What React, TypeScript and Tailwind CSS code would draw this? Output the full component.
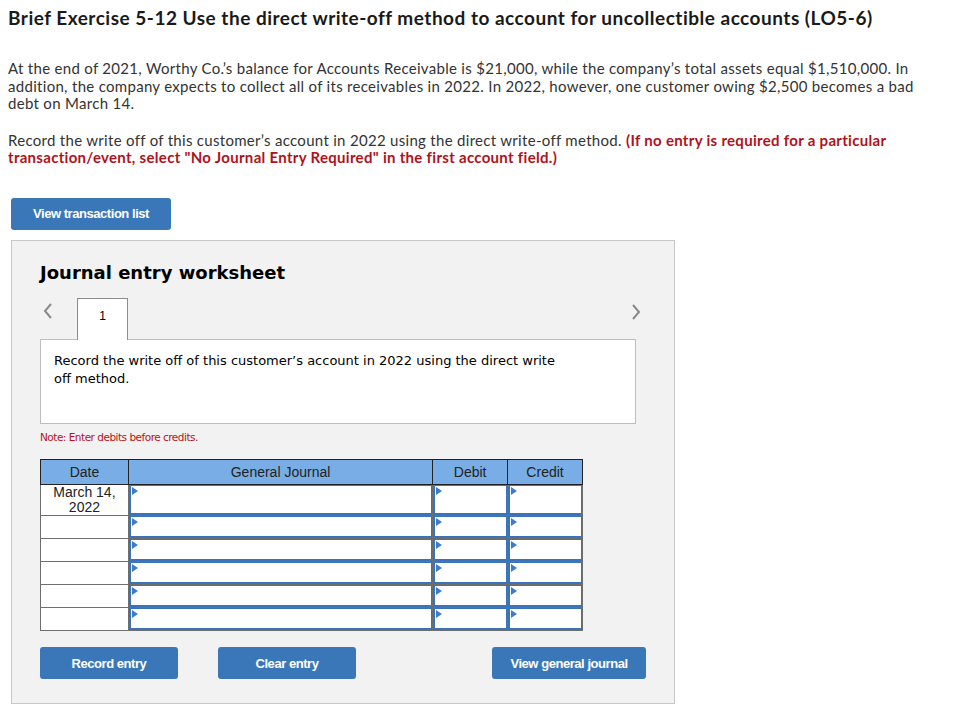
import React from "react";

const rows = [
  { date: ["March 14,", "2022"] },
  { date: null },
  { date: null },
  { date: null },
  { date: null },
  { date: null },
];

function Marker() {
  return (
    <svg className="absolute left-[1px] top-[1px]" width="6" height="8" viewBox="0 0 6 8">
      <path d="M0 0 L6 4 L0 8 Z" fill="#3d7cc9" />
    </svg>
  );
}

function InputCell({ h }: { h: string }) {
  return (
    <td className="border border-[#6e6e6e] p-0">
      <div className={`relative ${h} border border-b-2 border-l-2 border-[#3b73b9] bg-white`}>
        <Marker />
      </div>
    </td>
  );
}

function Btn({ children, w }: { children: React.ReactNode; w: string }) {
  return (
    <button
      className={`${w} h-8 rounded-[3px] bg-[#3a77b9] text-[13px] font-bold tracking-[-0.45px] text-white [font-family:'Liberation_Sans',Arial,sans-serif]`}
    >
      {children}
    </button>
  );
}

export default function App() {
  return (
    <div className="min-h-[726px] bg-white px-2 pt-[7px] text-[#222] [font-family:Lato,'Open_Sans',sans-serif]">
      <h1 className="text-[19px] font-bold leading-[22px] tracking-[0.5px] text-[#1a1a1a]">
        Brief Exercise 5-12 Use the direct write-off method to account for uncollectible accounts (LO5-6)
      </h1>

      <p className="mt-[31px] text-[15px] leading-[17.5px] tracking-[0.3px] text-[#333]">
        At the end of 2021, Worthy Co.’s balance for Accounts Receivable is $21,000, while the company’s total assets equal
        $1,510,000. In addition, the company expects to collect all of its receivables in 2022. In 2022, however, one customer
        owing $2,500 becomes a bad debt on March 14.
      </p>

      <p className="mt-[19px] text-[15px] leading-[17.5px] tracking-[0.3px] text-[#333]">
        Record the write off of this customer’s account in 2022 using the direct write-off method.{" "}
        <strong className="text-[#b0121b]">
          (If no entry is required for a particular transaction/event, select "No Journal Entry Required" in the first
          account field.)
        </strong>
      </p>

      <div className="mt-[31px] pl-[3px]">
        <Btn w="w-[160px]">View transaction list</Btn>
      </div>

      <div className="ml-[3px] mt-[10px] w-[664px] border border-[#c8c8c8] bg-[#f2f2f2] px-[28px] pb-[24px] pt-[18px]">
        <h2 className="text-[18px] font-bold text-black [font-family:'DejaVu_Sans',Verdana,sans-serif]">
          Journal entry worksheet
        </h2>

        <div className="mt-[12px] flex items-end">
          <svg className="mb-[20px] ml-[3px] mr-[24px]" width="10" height="16" viewBox="0 0 10 16">
            <path d="M8 1 L2 8 L8 15" fill="none" stroke="#8a8a8a" strokeWidth="2" />
          </svg>
          <div className="relative z-10 -mb-px flex h-[42px] w-[51px] justify-center border border-b-0 border-[#8c8c8c] bg-white pt-[8px] text-[12px] text-black [font-family:'Liberation_Sans',Arial,sans-serif]">
            1
          </div>
          <div className="flex-1" />
          <svg className="mb-[19px] mr-[5px]" width="10" height="16" viewBox="0 0 10 16">
            <path d="M2 1 L8 8 L2 15" fill="none" stroke="#8a8a8a" strokeWidth="2" />
          </svg>
        </div>

        <div className="h-[85px] w-[596px] border border-[#bdbdbd] bg-white px-[13px] pt-[12px] text-[13px] leading-[18px] text-black [font-family:'DejaVu_Sans',Verdana,sans-serif]">
          <p className="max-w-[512px]">
            Record the write off of this customer’s account in 2022 using the direct write off method.
          </p>
        </div>

        <p className="mt-[6px] text-[10.5px] tracking-[-0.5px] text-[#b5121b] [font-family:'DejaVu_Sans',Verdana,sans-serif]">
          Note: Enter debits before credits.
        </p>

        <table className="mt-[14px] w-[543px] border-collapse border border-[#6e6e6e] text-[14px] [font-family:'Liberation_Sans',Arial,sans-serif]">
          <thead>
            <tr className="h-[25px] bg-[#78ade6] text-[#222]">
              <th className="w-[88px] border border-[#222] font-normal">Date</th>
              <th className="w-[305px] border border-[#222] font-normal">General Journal</th>
              <th className="w-[75px] border border-[#222] font-normal">Debit</th>
              <th className="w-[75px] border border-[#222] font-normal">Credit</th>
            </tr>
          </thead>
          <tbody>
            {rows.map((r, i) => {
              const h = i === 0 ? "h-[30px]" : "h-[22px]";
              return (
                <tr key={i}>
                  <td className="border border-[#6e6e6e] bg-white p-0 text-center leading-[15px] text-[#222]">
                    {r.date && (
                      <>
                        {r.date[0]}
                        <br />
                        {r.date[1]}
                      </>
                    )}
                  </td>
                  <InputCell h={h} />
                  <InputCell h={h} />
                  <InputCell h={h} />
                </tr>
              );
            })}
          </tbody>
        </table>

        <div className="mt-[16px] flex w-[606px]">
          <Btn w="w-[138px]">Record entry</Btn>
          <div className="w-[40px]" />
          <Btn w="w-[138px]">Clear entry</Btn>
          <div className="flex-1" />
          <Btn w="w-[154px]">View general journal</Btn>
        </div>
      </div>
    </div>
  );
}
